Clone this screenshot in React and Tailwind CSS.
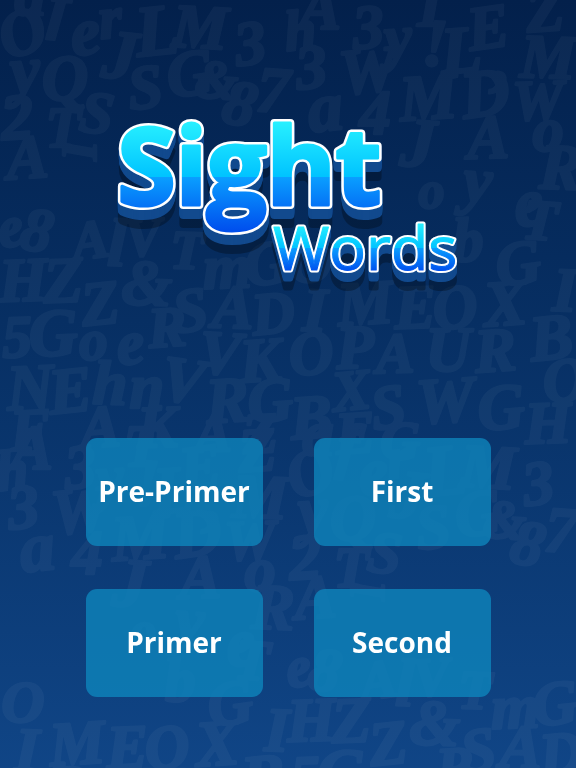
import React from "react";

const G = [
  ["O",22,32,52,-20],["e",85,32,54,-8],["J",120,55,56,6],["L",157,30,58,-6],["M",200,27,50,3],["3",250,43,50,-8],
  ["y",25,70,54,-4],["Q",65,78,52,-4],["S",145,87,50,-6],["G",190,73,52,-8],["&",217,80,44,4],["8",240,103,52,12],["7",273,90,52,4],
  ["2",17,117,52,-4],["T",63,127,46,0],["S",97,113,48,8],["A",27,157,50,-4],["I",80,150,40,90],["r",110,18,48,-6],["a",30,-6,50,0],["f",60,6,50,6],
  ["A",320,8,50,0],["T",430,6,48,0],["3",368,27,50,-4],["y",398,37,50,-4],["!",435,43,54,2],["L",461,50,54,-4],["E",488,27,50,-8],[",",505,58,60,8],["Z",545,10,50,-4],["M",548,57,50,2],
  ["3",311,67,50,-6],["W",368,70,52,-6],["a",325,107,56,-6],["4",375,113,50,0],["M",428,97,52,-4],["D",485,93,54,-8],["W",538,100,46,-2],["J",418,143,56,4],["A",488,137,50,-2],["o",548,130,50,0],["y",478,180,52,4],["R",561,167,52,2],["o",431,190,42,-4],["e",528,203,54,-10],["h",300,30,46,-6],
  ["e",10,227,46,-12],["8",37,230,50,10],["A",90,240,44,-8],["l",117,243,54,2],["V",143,237,44,-4],["T",187,250,44,2],["m",227,267,50,-2],["G",267,263,50,-6],
  ["H",23,280,50,-2],["Z",63,280,52,-2],["Z",100,303,50,-6],["&",147,283,52,2],["S",190,310,50,-8],["A",233,307,50,2],["D",273,313,48,-6],["O",311,262,48,0],
  ["5",17,337,48,-2],["G",53,333,54,-2],["o",93,340,46,-4],["e",130,343,50,-6],["R",167,327,46,-4],["V",220,353,50,4],["K",260,360,50,-4],
  ["N",30,387,52,-3],["E",70,390,52,-6],["h",110,383,50,2],["n",147,387,50,0],["V",183,380,52,8],["R",227,400,52,-4],["G",270,400,50,-4],
  ["F",30,430,48,-3],["A",100,427,48,-4],["K",157,427,48,-2],["A",213,433,44,-2],["Z",260,433,46,-3],
  ["b",468,240,50,-2],["G",518,263,50,-8],["I",565,290,50,2],["I",315,310,50,2],["M",365,303,50,-4],["E",415,307,50,-2],["O",455,307,50,-8],["X",505,303,52,-4],["O",311,353,50,-8],["P",355,347,50,-2],["A",395,353,46,-2],["U",448,350,50,0],["R",495,350,50,-4],["B",551,337,52,-6],
  ["X",351,390,46,-6],["S",388,407,50,-8],["W",445,400,52,-4],["G",501,407,52,-4],["H",548,423,48,-2],["O",565,380,50,-6],["B",311,417,50,-4],["E",355,433,48,-4],["G",400,440,44,0],["T",540,220,46,4],
];

const glyphs = [
  ...G,
  ...G.map(([c, x, y, s, r]) => [c, (x + 288) % 576, y + 440, s, r]),
];

function Wordmark({ text, x, y, size, weight, fill, depth, sw, grow, tracking }) {
  const common = {
    x,
    fontFamily: "'Open Sans', sans-serif",
    fontWeight: weight,
    fontSize: size,
    letterSpacing: tracking,
    strokeLinejoin: "round",
    strokeLinecap: "round",
  };
  const layers = [];
  for (let i = depth; i >= 1; i--) {
    layers.push(
      <text key={i} {...common} y={y + i} fill="#124a8e" stroke="#124a8e" strokeWidth={sw}>{text}</text>
    );
  }
  return (
    <g>
      <g opacity="0.28">
        <text {...common} y={y + depth + 9} fill="#000" stroke="#000" strokeWidth={sw}>{text}</text>
      </g>
      {layers}
      <text {...common} y={y} fill="#fff" stroke="#fff" strokeWidth={sw}>{text}</text>
      <text {...common} y={y} fill={fill} stroke={fill} strokeWidth={grow}>{text}</text>
    </g>
  );
}

function Level({ children }) {
  return (
    <button className="h-[108px] w-[177px] rounded-[11px] bg-[#0e85bc]/80 pb-[2px] text-[28px] leading-none font-bold text-white font-['Open_Sans',sans-serif]">
      {children}
    </button>
  );
}

export default function App() {
  return (
    <div className="relative h-[768px] w-[576px] overflow-hidden bg-linear-to-b from-[#03204b] to-[#104586]">
      <svg className="absolute inset-0" width="576" height="768" aria-hidden="true">
        <g opacity="0.04" fill="#fff" stroke="#fff" strokeWidth="2.5" strokeLinejoin="round">
          {glyphs.map(([c, x, y, s, r], i) => (
            <text
              key={i}
              x={x}
              y={y}
              fontSize={s * 1.25}
              fontFamily="'Liberation Serif', serif"
              fontWeight="700"
              fontStyle="italic"
              textAnchor="middle"
              dominantBaseline="central"
              transform={`rotate(${r} ${x} ${y})`}
            >
              {c}
            </text>
          ))}
        </g>
      </svg>
      <div className="relative flex flex-col">
        <svg className="mt-[100px] block" width="576" height="200" viewBox="0 100 576 200">
          <defs>
            <linearGradient id="sight" gradientUnits="userSpaceOnUse" x1="0" y1="118" x2="0" y2="230">
              <stop offset="0" stopColor="#2af3ff" />
              <stop offset="0.525" stopColor="#00c3ff" />
              <stop offset="0.525" stopColor="#0a9fff" />
              <stop offset="1" stopColor="#0050ee" />
            </linearGradient>
            <linearGradient id="words" gradientUnits="userSpaceOnUse" x1="0" y1="222" x2="0" y2="271">
              <stop offset="0" stopColor="#2af3ff" />
              <stop offset="0.53" stopColor="#00c3ff" />
              <stop offset="0.53" stopColor="#0a9fff" />
              <stop offset="1" stopColor="#0050ee" />
            </linearGradient>
          </defs>
          <Wordmark text="Sight" x={117} y={205} size={107} weight={700} fill="url(#sight)" depth={10} sw={8} grow={3} tracking={-1} />
          <Wordmark text="Words" x={273} y={270} size={61} weight={500} fill="url(#words)" depth={9} sw={5} grow={1} />
        </svg>
        <div className="mx-auto mt-[138px] grid w-[405px] grid-cols-[177px_177px] justify-between gap-y-[43px]">
          <Level>Pre-Primer</Level>
          <Level>First</Level>
          <Level>Primer</Level>
          <Level>Second</Level>
        </div>
      </div>
    </div>
  );
}
